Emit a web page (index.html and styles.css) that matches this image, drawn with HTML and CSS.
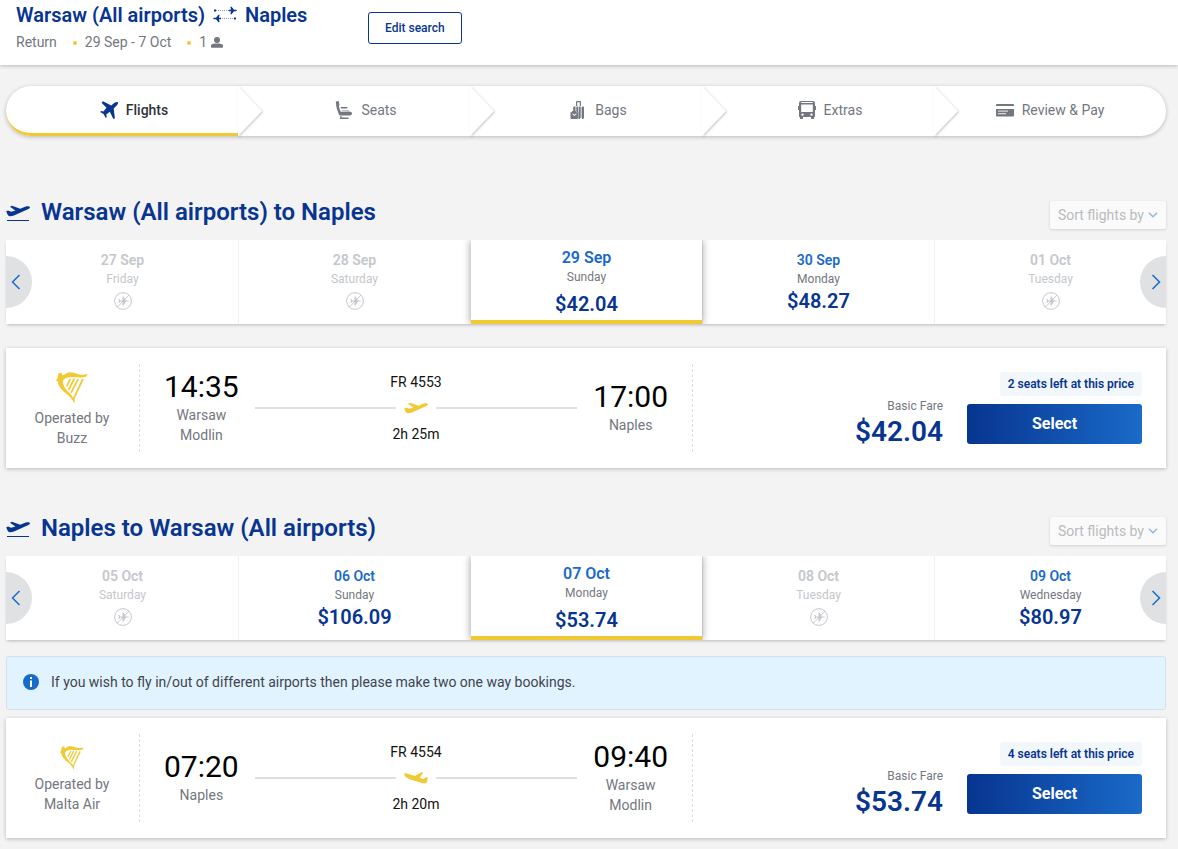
FILE: index.html
```html
<!DOCTYPE html>
<html lang="en">
<head>
<meta charset="utf-8">
<title>Warsaw to Naples - Select flights</title>
<meta name="viewport" content="width=device-width, initial-scale=1">
<link rel="stylesheet" href="styles.css">
</head>
<body>
<svg class="sprite" aria-hidden="true">
  <symbol id="takeoff" viewBox="0 0 24 12"><path d="M.3 6.2 2 5.400l3.200 1.400 4.200-1.300L4 1.700 6 .7l8.200 3 5.600-2.100c2-.7 3.700-.5 4.100.3.400.9-.8 1.800-2.600 2.600L8.500 10.200c-2.200.9-4.500 1.200-5.600.8C1.900 10.500.8 8.200.3 6.200z"/></symbol>
  <symbol id="landing" viewBox="0 0 24 12"><path d="M.2 1.500 2 1.300l4 1.200 5 1.600L17.300.2l2 .3-3.500 5.300 3.700 1.500 2-2 2.400.2-.9 4.300c-.5 1.500-2.200 1.900-4.200 1.500L6.600 7.500C3.500 6.600.2 4.600.2 1.500z"/></symbol>
  <symbol id="harp" viewBox="0 0 32 32"><path d="M4.200.8c1.200 0 2 .8 2.100 1.900l1 .6C9.500 1.300 12-.1 15 .2c3.700.3 6.500 2.200 10 2.500 2.200.2 4.700 0 6.900-.7L30 4.800C25 6.400 20 5 15.500 5c-4.200 0-7.500 1.500-8.800 4 .1 4 2.100 7.200 5 10.200 2.500 2.600 4.500 4.800 5.500 6.600L25.800 7l2 .2-9 19.100-.3 5.200c-1.700-3.700-4-6.300-7.200-9.100C5.400 18.200 1.600 13.500 2 9.500L0 8.600l1.800-3.100-.1-1.100c.5-.5.400-1 .5-1.700.1-1.100.9-1.900 2-1.900z"/><path d="m14.300 6.800-3.500 7.500M18.300 6.500 12.600 18M22.200 6.800l-7.200 14" class="harp-strings"/></symbol>
  <symbol id="no-flight" viewBox="0 0 18 18"><circle cx="9" cy="9" r="8.400" class="line"/><path d="M3.300 15.200 14.800 3.200" class="line"/><path d="M4.300 7h1l1 1.400h2.200L8.600 4.500h1l2.200 3.900h1.700c1.100 0 1.400.3 1.400.6s-.3.600-1.400.6h-1.700l-2.200 3.900h-1l-.1-3.900H6.300L5.300 11h-1L5 9z"/></symbol>
  <symbol id="chev-left" viewBox="0 0 10 16"><path d="M8.500 1 1.500 8l7 7"/></symbol>
  <symbol id="chev-right" viewBox="0 0 10 16"><path d="m1.500 1 7 7-7 7"/></symbol>
  <symbol id="divider" viewBox="0 0 30 50"><path d="M-6 0H0l24 25L0 50h-6z"/></symbol>
</svg>

<header class="trip">
  <div class="trip-info">
    <h1 class="trip-title">Warsaw (All airports)
      <svg class="swap" viewBox="0 0 24 16" role="img" aria-label="return trip"><path d="M3 3.500h15M7 11.500h14" class="dots"/><path d="M1 2.500h2v2H1zM21 10.500h2v2h-2zM16 2.800h2L17.400-.2h1.200L21 2.800h2l1 .7-1 .7h-2l-2.400 3h-1.200l.6-3h-2zM8 10.800H6l.6-3H5.400L3 10.800H1l-1 .7 1 .7h2l2.400 3h1.200l-.6-3h2z"/></svg>
      Naples</h1>
    <p class="trip-meta"><span>Return</span><span class="bullet">29 Sep - 7 Oct</span><span class="bullet">1 <svg class="person" viewBox="0 0 12 11" role="img" aria-label="passenger"><circle cx="6" cy="3" r="3"/><path d="M0 10V8.500C0 7 3 6.500 6 6.500s6 .5 6 2V10q0 .7-.7.700H.7Q0 10.700 0 10z"/></svg></span></p>
  </div>
  <button class="edit" type="button">Edit search</button>
</header>

<main class="page">
  <nav aria-label="Booking steps">
    <ol class="steps">
      <li class="step active" aria-current="step"><svg class="step-icon" viewBox="0 0 18 18"><path d="M3 .2 11.200 4.500l3.300-2.700C16 .7 17.300.7 17.800 1.200s.2 1.800-.9 3.100l-3.200 3.300 1.200 9.700-1.500.6-3.600-7.200-3.600 2.700.6 2.500-1.100 1-2.100-3.800L.1 11l1-1.100 2.300.5 3.100-3.600L1.600 1.700z"/></svg><span>Flights</span><svg class="divider"><use href="#divider"/></svg></li>
      <li class="step"><svg class="step-icon" viewBox="0 0 18 18"><path d="M.8.500 3.600 0l.8 3.500-.5 2.200 1.300 4c.3.700.6 1 1.300 1l7.500-.2q3 .1 3 2.100t-2.400 2H6.300c-1.500 0-2.300-.7-2.700-1.900L1.500 6.500zM5.500 6h6.800v1.500H6zM5.500 15h1v1.500h7V18H4.800z"/><path d="M7 9h7v1H7z" opacity=".5"/></svg><span>Seats</span><svg class="divider"><use href="#divider"/></svg></li>
      <li class="step"><svg class="step-icon" viewBox="0 0 18 18"><path d="M8 0h3q1 0 1 1v4h-1.200V1.200H8.200V5H7V1q0-1 1-1z"/><path d="M5.200 5.500H6.500V10H4.200V6.500q0-1 1-1zM7.500 5.500H9V10.800H7.500zM9.500 11H10V5.500h1.500V17H9.500zM13 5.500h1q1 0 1 1V17h-2z"/><path d="M7 6h6v11H9.500v-6H7z" opacity=".4"/><path d="M9.500 16.500H11V18H9.500zM13 16.500h1.500V18H13z"/><path d="M3.300 10h3.400l.8 1.200H9V17q0 1-1 1H2.500q-1 0-1-1v-5.800h1zm-.1 3 2.100 2 2.500-2-.8-.5-1.700 1.200-1.400-1.200z" fill-rule="evenodd"/></svg><span>Bags</span><svg class="divider"><use href="#divider"/></svg></li>
      <li class="step"><svg class="step-icon" viewBox="0 0 18 18"><path d="M3 0h12q2 0 2 2v3h1v4h-1v7h-1v2h-3v-2H5v2H2v-2H1V9H0V5h1V2q0-2 2-2zm.2 1v.9h11.600V1zM3.200 3.500V11h11.600V3.500zm1.300 8.900a1.200 1.200 0 1 0 0 2.400 1.200 1.200 0 0 0 0-2.400zm9 0a1.200 1.200 0 1 0 0 2.400 1.200 1.200 0 0 0 0-2.400z" fill-rule="evenodd"/></svg><span>Extras</span><svg class="divider"><use href="#divider"/></svg></li>
      <li class="step last"><svg class="step-icon" viewBox="0 0 18 18"><path d="M1 3h16q1 0 1 1v1H0V4q0-1 1-1zM0 8h18v6.500q0 1-1 1H1q-1 0-1-1z"/><path d="M2 9.500h10v1.200H2zM2 12h8v1.200H2z" class="card-line"/></svg><span>Review &amp; Pay</span></li>
    </ol>
  </nav>

  <section class="leg" aria-labelledby="leg-out">
    <div class="leg-head">
      <h2 class="leg-title" id="leg-out"><svg class="leg-icon" viewBox="0 0 24 18"><use href="#takeoff" width="24" height="12"/><path d="M1 15h22v1H1z"/></svg>Warsaw (All airports) to Naples</h2>
      <button class="sort" type="button">Sort flights by <svg class="sort-chev" viewBox="0 0 10 6"><path d="m1 .8 4 4 4-4"/></svg></button>
    </div>
    <div class="dates">
      <button class="date off" type="button" disabled><span class="day">27 Sep</span><span class="weekday">Friday</span><span class="cost"><svg class="none" role="img" aria-label="No flights"><use href="#no-flight"/></svg></span></button>
      <button class="date off" type="button" disabled><span class="day">28 Sep</span><span class="weekday">Saturday</span><span class="cost"><svg class="none" role="img" aria-label="No flights"><use href="#no-flight"/></svg></span></button>
      <button class="date selected" type="button" aria-pressed="true"><span class="day">29 Sep</span><span class="weekday">Sunday</span><span class="cost">$42.04</span></button>
      <button class="date" type="button"><span class="day">30 Sep</span><span class="weekday">Monday</span><span class="cost">$48.27</span></button>
      <button class="date off" type="button" disabled><span class="day">01 Oct</span><span class="weekday">Tuesday</span><span class="cost"><svg class="none" role="img" aria-label="No flights"><use href="#no-flight"/></svg></span></button>
      <button class="arrow prev" type="button" aria-label="Earlier dates"><svg class="arrow-icon"><use href="#chev-left"/></svg></button>
      <button class="arrow next" type="button" aria-label="Later dates"><svg class="arrow-icon"><use href="#chev-right"/></svg></button>
    </div>
    <article class="flight">
      <div class="carrier"><svg class="harp"><use href="#harp"/></svg><p>Operated by<br>Buzz</p></div>
      <div class="journey">
        <div class="stop"><time class="clock">14:35</time><span>Warsaw</span><span>Modlin</span></div>
        <div class="route"><span>FR 4553</span><div class="track"><svg class="plane"><use href="#takeoff"/></svg></div><span>2h 25m</span></div>
        <div class="stop"><time class="clock">17:00</time><span>Naples</span></div>
      </div>
      <div class="fare">
        <p class="badge">2 seats left at this price</p>
        <p class="price"><span class="price-label">Basic Fare</span><strong class="price-value">$42.04</strong></p>
        <button class="select" type="button">Select</button>
      </div>
    </article>
  </section>

  <section class="leg" aria-labelledby="leg-back">
    <div class="leg-head">
      <h2 class="leg-title" id="leg-back"><svg class="leg-icon" viewBox="0 0 24 18"><use href="#takeoff" width="24" height="12"/><path d="M1 15h22v1H1z"/></svg>Naples to Warsaw (All airports)</h2>
      <button class="sort" type="button">Sort flights by <svg class="sort-chev" viewBox="0 0 10 6"><path d="m1 .8 4 4 4-4"/></svg></button>
    </div>
    <div class="dates">
      <button class="date off" type="button" disabled><span class="day">05 Oct</span><span class="weekday">Saturday</span><span class="cost"><svg class="none" role="img" aria-label="No flights"><use href="#no-flight"/></svg></span></button>
      <button class="date" type="button"><span class="day">06 Oct</span><span class="weekday">Sunday</span><span class="cost">$106.09</span></button>
      <button class="date selected" type="button" aria-pressed="true"><span class="day">07 Oct</span><span class="weekday">Monday</span><span class="cost">$53.74</span></button>
      <button class="date off" type="button" disabled><span class="day">08 Oct</span><span class="weekday">Tuesday</span><span class="cost"><svg class="none" role="img" aria-label="No flights"><use href="#no-flight"/></svg></span></button>
      <button class="date" type="button"><span class="day">09 Oct</span><span class="weekday">Wednesday</span><span class="cost">$80.97</span></button>
      <button class="arrow prev" type="button" aria-label="Earlier dates"><svg class="arrow-icon"><use href="#chev-left"/></svg></button>
      <button class="arrow next" type="button" aria-label="Later dates"><svg class="arrow-icon"><use href="#chev-right"/></svg></button>
    </div>
    <p class="notice"><svg class="info" viewBox="0 0 16 16"><circle cx="8" cy="8" r="8" class="info-disc"/><path d="M7 3h2v2H7zM7 6.500h2V13H7z"/></svg>If you wish to fly in/out of different airports then please make two one way bookings.</p>
    <article class="flight after-notice">
      <div class="carrier"><svg class="harp small"><use href="#harp"/></svg><p>Operated by<br>Malta Air</p></div>
      <div class="journey">
        <div class="stop"><time class="clock">07:20</time><span>Naples</span></div>
        <div class="route"><span>FR 4554</span><div class="track"><svg class="plane"><use href="#landing"/></svg></div><span>2h 20m</span></div>
        <div class="stop"><time class="clock">09:40</time><span>Warsaw</span><span>Modlin</span></div>
      </div>
      <div class="fare">
        <p class="badge">4 seats left at this price</p>
        <p class="price"><span class="price-label">Basic Fare</span><strong class="price-value">$53.74</strong></p>
        <button class="select" type="button">Select</button>
      </div>
    </article>
  </section>
</main>
</body>
</html>
```
FILE: styles.css
```css
:root {
  --navy: #073590;
  --blue: #1a6ac8;
  --yellow: #f1c933;
  --grey: #737780;
  --shadow: 0 1px 4px rgba(0, 0, 0, .24);
}
* { box-sizing: border-box; }
body {
  margin: 0;
  background: #f3f3f3;
  color: var(--grey);
  font: 14px/20px Roboto, "Liberation Sans", sans-serif;
}
h1, h2, p, ol { margin: 0; padding: 0; }
button { font: inherit; cursor: pointer; }
svg { display: block; flex: none; fill: currentColor; }
.sprite { position: absolute; width: 0; height: 0; }

.trip {
  display: flex;
  align-items: flex-start;
  padding: 3px 16px 13px;
  background: #fff;
  box-shadow: 0 1px 4px rgba(0, 0, 0, .24);
}
.trip-info { min-width: 352px; }
.trip-title {
  display: flex;
  align-items: center;
  gap: 8px;
  color: var(--navy);
  font-size: 20px;
  font-weight: 600;
  line-height: 24px;
}
.swap { width: 24px; height: 16px; overflow: visible; }
.dots { stroke: currentColor; stroke-width: 1; stroke-dasharray: 1 1; opacity: .5; }
.trip-meta { display: flex; margin-top: 5px; }
.bullet { display: flex; align-items: center; gap: 4px; }
.bullet::before {
  content: "";
  width: 4px;
  height: 4px;
  margin: 1px 4px 0 16px;
  border-radius: 50%;
  background: var(--yellow);
}
.person { width: 12px; height: 11px; margin-top: 1px; }
.edit {
  height: 32px;
  margin-top: 9px;
  padding: 0 16px;
  border: 1px solid var(--navy);
  border-radius: 3px;
  background: #fff;
  color: var(--navy);
  font-size: 12px;
  font-weight: 500;
}

.page { padding: 21px 12px 11px 6px; }
.steps {
  display: grid;
  grid-template-columns: repeat(5, 1fr);
  height: 50px;
  border-radius: 25px;
  background: #fff;
  box-shadow: var(--shadow);
  list-style: none;
}
.step {
  position: relative;
  display: flex;
  align-items: center;
  justify-content: center;
  gap: 8px;
  padding: 0 0 2px 24px;
}
.last { padding-left: 0; }
.active {
  padding-top: 1px;
  padding-bottom: 0;
  border-bottom: 3px solid var(--yellow);
  border-radius: 25px 0 0 25px;
  color: #2e333c;
  font-weight: 500;
}
.active .step-icon { color: var(--navy); }
.step-icon { width: 18px; height: 18px; }
.card-line { fill: #fff; opacity: .7; }
.divider {
  position: absolute;
  top: 0;
  left: 100%;
  width: 30px;
  height: 50px;
  color: #fff;
  filter: drop-shadow(1px 1px 1px rgba(0, 0, 0, .2));
}

.leg { padding-top: 60px; }
.leg + .leg { padding-top: 44px; }
.leg-head { display: flex; align-items: flex-start; justify-content: space-between; margin-bottom: 11px; }
.leg-title {
  display: flex;
  align-items: center;
  gap: 11px;
  color: var(--navy);
  font-size: 24px;
  font-weight: 600;
  line-height: 32px;
}
.leg-icon { width: 24px; height: 18px; margin-top: 4px; }
.sort {
  display: flex;
  align-items: center;
  gap: 4px;
  height: 28px;
  margin-top: 5px;
  padding: 0 8px;
  border: 0;
  border-radius: 2px;
  background: #fafafa;
  color: #b9bbbf;
  box-shadow: 0 1px 3px rgba(0, 0, 0, .14);
}
.sort-chev { width: 10px; height: 6px; fill: none; stroke: #8cb4e3; stroke-width: 1.3; }

.dates {
  position: relative;
  display: grid;
  grid-template-columns: repeat(5, 1fr);
  background: #fff;
  box-shadow: 0 2px 3px -1px rgba(0, 0, 0, .24);
}
.date {
  display: flex;
  flex-direction: column;
  align-items: center;
  height: 84px;
  padding: 10px 0 0;
  border: 0;
  border-left: 1px solid #f1f1f1;
  background: transparent;
  color: var(--grey);
}
.date:first-child { border-left-color: transparent; }
.day { color: var(--blue); font-weight: 600; line-height: 20px; }
.weekday { font-size: 12px; line-height: 18px; }
.cost {
  display: flex;
  align-items: center;
  height: 26px;
  color: var(--navy);
  font-size: 20px;
  font-weight: 600;
}
.off, .off .day, .off .cost { color: #c4c7cb; }
.selected {
  margin-left: 1px;
  padding-top: 8px;
  border-left: 0;
  border-bottom: 4px solid var(--yellow);
  background: #fff;
  box-shadow: 0 0 8px rgba(0, 0, 0, .4);
  clip-path: inset(0 -12px);
}
.selected .day { font-size: 16px; }
.selected .cost { margin-top: 5px; }
.none { width: 18px; height: 18px; }
.line { fill: none; stroke: currentColor; stroke-width: 1; }
.arrow {
  position: absolute;
  top: 16px;
  display: flex;
  align-items: center;
  width: 26px;
  height: 52px;
  padding: 0 5px;
  border: 0;
  background: #dfe1e3;
  color: var(--blue);
}
.prev { left: 0; border-radius: 0 26px 26px 0; }
.next { right: 0; justify-content: flex-end; border-radius: 26px 0 0 26px; }
.arrow-icon { width: 10px; height: 16px; fill: none; stroke: currentColor; stroke-width: 1.5; }

.notice {
  display: flex;
  align-items: center;
  gap: 12px;
  margin-top: 16px;
  padding: 15px 16px 17px;
  border: 1px solid #d3e1ea;
  border-radius: 3px;
  background: #e1f3ff;
  color: #40454d;
}
.info { width: 16px; height: 16px; fill: #fff; }
.info-disc { fill: var(--blue); }

.flight {
  display: grid;
  grid-template-columns: 134px 1fr 473px;
  min-height: 120px;
  margin-top: 24px;
  padding: 16px 0;
  background: #fff;
  box-shadow: var(--shadow);
}
.after-notice { margin-top: 8px; }
.carrier {
  display: flex;
  flex-direction: column;
  align-items: center;
  justify-content: center;
  gap: 4px;
  padding: 4px 1px 0 0;
  border-right: 1px dashed #dcdcdc;
  text-align: center;
}
.harp { width: 32px; height: 32px; color: var(--yellow); }
.small { width: 24px; height: 24px; }
.harp-strings { fill: none; stroke: currentColor; stroke-width: 1.7; }
.journey {
  display: flex;
  align-items: center;
  gap: 16px;
  padding: 0 24px;
  border-right: 1px dashed #dcdcdc;
}
.stop { display: flex; flex-direction: column; align-items: center; padding-bottom: 2px; }
.clock { color: #000; font-size: 30px; font-weight: 400; line-height: 36px; }
.route {
  flex: 1;
  display: flex;
  flex-direction: column;
  align-items: center;
  gap: 10px;
  color: #111;
}
.track { display: flex; align-items: center; gap: 8px; width: 100%; }
.track::before, .track::after { content: ""; flex: 1; height: 2px; background: #dfdfe0; }
.plane { width: 24px; height: 12px; color: var(--yellow); }
.fare {
  display: grid;
  grid-template-columns: 1fr 175px;
  grid-template-rows: 24px 40px;
  gap: 8px 24px;
  align-content: start;
  padding: 8px 24px 0 0;
}
.badge {
  grid-column: 2;
  justify-self: end;
  padding: 2px 8px;
  border-radius: 3px;
  background: #f2f7fc;
  color: var(--navy);
  font-size: 12px;
  font-weight: 600;
  white-space: nowrap;
}
.price {
  grid-column: 1;
  align-self: end;
  display: flex;
  flex-direction: column;
  align-items: flex-end;
  gap: 4px;
}
.price-label { font-size: 12px; line-height: 20px; }
.price-value { color: var(--navy); font-size: 28px; font-weight: 600; line-height: 24px; }
.select {
  border: 0;
  border-radius: 3px;
  background: linear-gradient(90deg, var(--navy), var(--blue));
  color: #fff;
  font-size: 16px;
  font-weight: 700;
}
```
